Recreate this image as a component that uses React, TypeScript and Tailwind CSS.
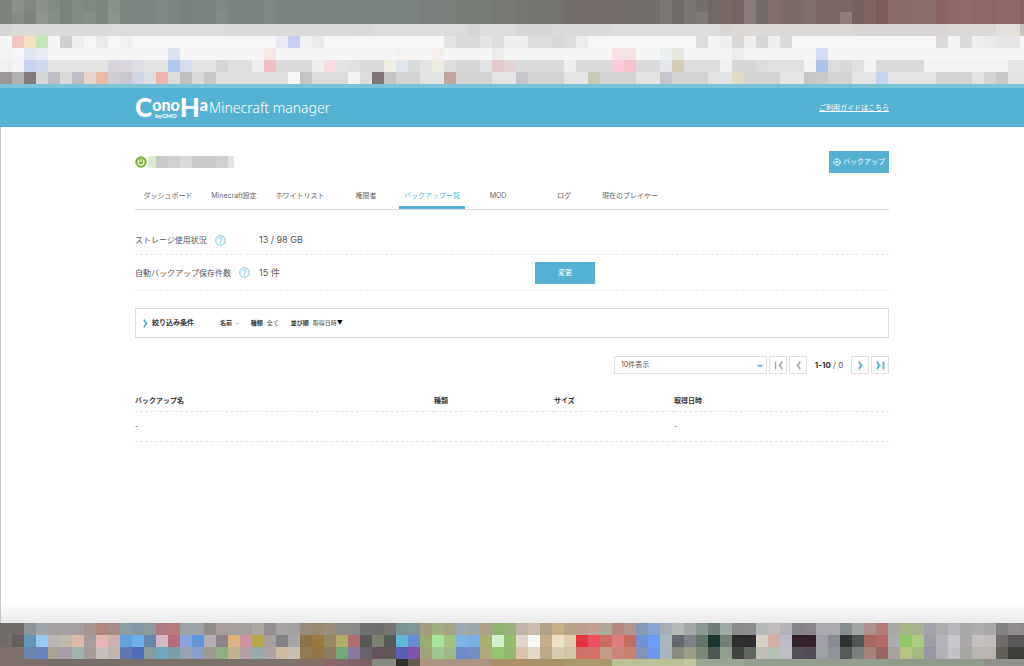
import React, { useState } from "react";

// Each row is a list of cell colours, "d9d9d9*4" repeats a colour four times
const topRows: string[] = [
    "7c847d 899089 7f8881 8a918b 828a84 7a827c 818983 7f8781 7d857f 88908a 7d8680*3 7f8882 7c857f 78817b 7b8580*2 7f8883 7b8580*3 7e8782 7b8580*4 7a857f*2 7a8580*3 79837e*3 79807b*3 787d78*3 777a75*2 767873 757570*2 75716d 756e6b*5 76706c*3 7b7876 706c6a 7c7674 756f6c 706967 7a6b69 736765 8b7b78 756c69 806f6b 7c6c69*2 7f706c 7a6865*2 7b6663 756260 7e6361 7b5a5a 8b6c6a 876c68 8a706c 8c6f6c 8a6765 8a6b69 8f6c6b 8c6767*2 8f686a*2 8b6062",
    "7c847d 848b84 7a837c 8e958f 858d87 7a827c 818983 858d87 7d857f 8b938d 7d8680*3 7f8882 7c857f 78817b 7b8580*2 818a84 7b8580*3 7e8782 7b8580*4 7a857f*2 7a8580*3 79837e*3 79807b*3 787d78*3 777a75*2 767873 757570*2 75716d 756e6b*5 76706c*3 7b7876 706c6a 7c7674 827a77 706967 7a6b69 736765 8b7b78 756c69 806f6b 7c6c69*2 7f706c 7a6865*2 8f7e7c 756260 7e6361 7b5a5a 8b6c6a 876c68 8a706c 8c6f6c 8a6765 8a6b69 8f6c6b 8c6767*2 8f686a*2 8b6062",
    "d5d5d4 dadad9*8 dbdbda*10 dadad8*10 d9dad8*2 dcdddb*6 dbdbda*2 d5d6d4 dcdddb*3 d6d7d5*3 dadad8*5 dcdcda*5 dedcda*4 d9d5d2 dcd8d6*10 d9d5d4*8 dcd8d6*4 e3dfdd*2 c8c2bb*2",
    "f5f5f5 f3c4c4 f3e2bd c4e6bd f5f5f5 cfcfcf eeeeee f6f6f6 e9e9e9 f6f6f6 f1f1f1 f6f6f6*12 e9e9f6 c6cff0 f0f0f0 e9e9e9 f6f6f6*10 e3e3e3 dadada*2 e3e3e3 dcdcdc efefef*2 dcdcdc*2 d8d8d8 dcdcdc ececec f6f6f6*9 dcdcdc f3f3f3 eeeeee dad8d7 eeeeee d6d6d6 eeeeee dadada f6f6f6*12 dcd9d9 f3f3f3 dadada eeeeee e9e9e9 e5e5e5*2 f6f6f6",
    "f3f3f3 f6f6f6 dfe4f2 e6e9f2 f5f5f5*10 dbe1ee f5f5f5*7 f6e6e6 f5f5f5*10 f5f1ef f5f5f5*2 f5eeec f5f5f5*4 f0ebeb f5f5f5*9 f5e0e3*2 f5f5f5*2 eaeff0 e6e8df f3f3f3*4 ececec f5f5f5*6 d3dcf0 f5f5f5*17",
    "f0f0f0 f5f5f5 c6d3ee ccd8ec e3e3e3*5 d8d3dd d9d6dd dddde3 e3e3e3*2 b0c7ea d5ddeb e3e3e3*2 d5d5d8 dedede*2 eeeeee f0bfc4 d9d9d9*3 eeeeee f5dde0 e3e3e3 e0e0e0 dadada*2 eeeee3 e0e5ec d8dadc e3e3e3 ecebdf dddddf d6d6d6*2 e3e3e3 e3c9ca e3d3d4 dadada*4 eeeeee dadada*3 f7ccd8 f3c2ca dadada*2 e3e5ea d6ccb4 dcdcdc*3 f0f0f0 d8d6d4*2 dbdbdb e0e0e0*3 f3f3f3 adc4e8 dcdcdc d8d8d8 e0e0e0 f3f3f3 dadada*4 f3f3f3*7 e5e5e5*2",
    "9b9697 b3b0b0 827a7c d6d6d8 bdbdc6 dadada bdbdc4 e6d5cc ecb8a6 d0cdd4 cac7ce d0d4e6 dfdfe3 ecb3ac dcdcdc bfbfbf d9d9d9 c9c8c6 dedede*6 f6f6f6 c4c4c4 dcdcdc*3 f3f3f3 dcdcdc 807678 c6c4c2 d3d3d3*2 e3e3e3*2 c0a49e d4d4d4*3 e4e4e4*2 c4c4ca d3d3d3*3 e5e5e5*2 c9c8b2 d4d4d4*3 e3e3e3*2 c4c4cc d3d3d3*3 e2e2e2*2 dfdac2 d4d4d4*3 e6e6e6*2 c6c6c6 cccaca d4d4d4*2 e6e6e6*2 c4d3ee e4e4e4*4 d3d3d3*3 e3e3e3 d3d3d3 c8c8c8 e3e3e3*2",
];

const bottomRows: string[] = [
    "716b68 6f6a69 8b9598 9fa6ab a3a09f*3 a69690 b08580 a68b88 8c9da5 8499a3 8e989d ad7c80 b87a7b 9ca3a6 9da2a6 928d88 a89c9c a5a09e*2 aea8a2 948f8f a5a3a3 a3a09f 988b79 978a73 968d7c 8c8b85 8a8a8a 707070 6e706d 757673 7d9496 7f9599 a39c80 9eb07f a3a385 9dabb0 9da8ad ada085 8fb272 9baf7a c0b2ab cabfb2 b0a286 c4b283 b7a589 bd9f94 c49f95 adaa9c b58683 b0968d 8898b0 8ba5d2 a6aeb5 b5b9b6 a3a8a5 8a9892 6e7f78 9eaaa4 8b8b8b 8d8d8d b4b8b9 bfbabc b3b2b9 86828a 8b828c aaa9b0*2 868c8f a1a7a5 ad8f8d b07d79 aba9a5 a5b584 a9b194 a4a3ac adabae b5b4b9 aaa8a8 aeacac aaa9a8 848383 918d8d 8c8b8a",
    "736c68 655f5c 6495b5 99c9f0 b9b6b8 bfbba9 dab9a6 a79c99 e6b5b3 cfb1ac 62a1dc 6cb1ed 6c85a8 d3b7c1 b36c7b 8aa5da 6096dc b3afae 8c828a dab37d cb95a1 b3a64b a7a09e 828286 a5a5a8 8c7448 9c7a3d 958664 b3ad6c b06d70 575756 7b8071 575955 62b7d4 678cd6 9dab72 a6e69b a3c07f 7fb5e3 79b0eb a5b36b d5f0cf 94bc6a e3d3cf fbfaf7 c6ae8b efe0c5 e0ceb0 e5363f ec5060 cc6a60 dd7d7d c26b5f 7091d0 6c9bf8 aab7bf 64696b 7c8287 64736a 1d3530 748077 2d2e2d*2 d9d1c4 d1ae9f bcbbcc 34222b 332029 9f9fa8 8a8a93 2f3433 4f5754 a66762 b46a67 adadad 93c465 aecb86 9f9da6 b3b2b8 c6c7cc aaa8a9 c3c0bf bfbcbb 706d6c 5a5857*2",
    "7d716b 7d726d 6c87ab 6c83c0 a9a393 a89dac 9cb3ae a69b96 c5c0bc bfb3ad 6278ae 526eb9 8b9a9d 71a6bf 7a9fa6 95a1b0 8aa0c8 9e9992 8ead83 c0b291 b2a0a5 96abb0 ada3a6 cbb9a1 c9bfb5 937a56 957646 8c7b60 73a77a 8c79a0 66616a 64525c 605656 5c5db5 7d53ac a0a374 9fc68b a1b786 6e8cc8 748dc2 b0ab78 94c670 96b76e dac3ad e2d8c5 bba888 d6ccb0 cfc5a8 cf7163 d4706a c49c88 c98779 ca8175 8393b6 6f98e5 a9b5bd 888c80 9a9d87 7b8878 4c5a51 93a08d 424541 61655f bfbdb4 b2c2b2 bdbfc5 54505a 524c58 9fa1a7 91949b 565b58 7a807c a6807d 97655f a9a19e b5c38b a4b87f 9796a3 b0b0b5 c0c2c7 a8a7a5 b7b5b0 b8b4ae 5f5f57 3d3c38*2",
    "7b706a*4 776d69*6 7b716b*8 7d716c*7 83706b*2 8c666b 84696b 7f656c 7c6066 888a80*2 33302b 635a4e ac9583*6 ab9069*3 a9916b*3 a99a6e*4 bcc097*6 c0c39d 99a593*4 949e8f*12 919b8c*8 8f918a*4",
];

const tabs = [
    "ダッシュボード",
    "Minecraft設定",
    "ホワイトリスト",
    "権限者",
    "バックアップ一覧",
    "MOD",
    "ログ",
    "現在のプレイヤー",
];

const columns = ["バックアップ名", "種類", "サイズ", "取得日時"];

const expandRow = (row: string): string[] =>
    row.split(" ").flatMap((item) => {
        const [color, times] = item.split("*");
        return Array<string>(Number(times || 1)).fill(color);
    });

function Mosaic({ rows, height, className }: { rows: string[]; height: number; className: string }) {
    return (
        <svg
            className={className}
            viewBox={`0 0 1024 ${height}`}
            preserveAspectRatio="none"
            shapeRendering="crispEdges"
            aria-hidden="true"
        >
            {rows.map((row, y) =>
                expandRow(row).map((color, x) => (
                    <rect key={`${x}-${y}`} x={x * 12} y={y * 12} width="12" height="12" fill={`#${color}`} />
                ))
            )}
        </svg>
    );
}

function HelpIcon() {
    return (
        <svg className="size-[11px] shrink-0" viewBox="0 0 22 22" fill="none" stroke="#55b2d4" aria-hidden="true">
            <circle cx="11" cy="11" r="9.5" strokeWidth="1.6" />
            <path d="M8 8.600c0-4 6.200-4 6.200-.4 0 2.300-3.100 2.300-3.100 5" strokeWidth="2" />
            <path d="M11.100 15v2.200" strokeWidth="2" />
        </svg>
    );
}

function Arrow({ direction, bar, color }: { direction: "left" | "right"; bar?: boolean; color: string }) {
    return (
        <svg className="h-[9px] w-[11px]" viewBox="0 0 11 9" fill="none" stroke={color} strokeWidth="1.8" aria-hidden="true">
            {direction === "left" ? (
                <>
                    <path d="M7 .5Q6.300 3 4.500 4.500Q6.300 6 7 8.500" transform={bar ? "translate(2 0)" : undefined} />
                    {bar && <path d="M2.500.5v8" strokeWidth="1.500" />}
                </>
            ) : (
                <>
                    <path d="M4 .5Q4.700 3 6.500 4.500Q4.700 6 4 8.500" transform={bar ? "translate(-2 0)" : undefined} />
                    {bar && <path d="M8.500.5v8" />}
                </>
            )}
        </svg>
    );
}

export default function App() {
    const [activeTab, setActiveTab] = useState<string>("バックアップ一覧");
    const [perPage, setPerPage] = useState<string>("10");

    const pagerButton = "flex size-[18px] items-center justify-center border border-[#e0e0e0] bg-white";

    return (
        <div className="flex min-h-screen flex-col bg-white font-['Inter','Noto_Sans_CJK_JP',sans-serif] text-[7px] leading-3 text-[#555]">
            <Mosaic rows={topRows} height={84} className="block h-[84px] w-full" />

            <header className="border-t-4 border-[#7cc3d6] bg-[#55b2d4] text-white">
                <div className="mx-auto flex h-[39px] max-w-[754px] items-center justify-between">
                    <h1 className="flex items-center gap-px">
                        <span className="flex items-start font-['Lato',sans-serif] text-[16px] leading-4 font-black">
                            <span className="text-[26px] leading-5">C</span>
                            <span className="flex flex-col items-center">
                                <span>ono</span>
                                <span className="text-[6px] leading-[5px]">byGMO</span>
                            </span>
                            <span className="text-[26px] leading-5">H</span>
                            <span>a</span>
                        </span>
                        <span className="font-['Noto_Sans',sans-serif] text-[14px] leading-5 font-light">Minecraft manager</span>
                    </h1>
                    <a href="#guide" className="underline">ご利用ガイドはこちら</a>
                </div>
            </header>

            <main className="flex-1 border-x border-l-[#c8c8c8] border-r-white">
                <div className="mx-auto max-w-[754px] pt-6">
                    <div className="flex items-center justify-between">
                        <div className="flex items-center gap-px">
                            <svg className="size-[12px]" viewBox="0 0 24 24" fill="none" stroke="#fff" aria-hidden="true">
                                <circle cx="12" cy="12" r="11.500" fill="#79b637" stroke="none" />
                                <path d="M8.500 7.500a6 6 0 1 0 7 0M12 5v7" strokeWidth="2.200" />
                            </svg>
                            <svg className="h-3 w-[86px]" viewBox="0 0 86 12" shapeRendering="crispEdges" aria-hidden="true">
                                <path fill="#dde9d6" d="M0 0h8v12H0z" />
                                <path fill="#c9c9c9" d="M8 0h12v12H8z" />
                                <path fill="#d0d0d0" d="M20 0h12v12H20z" />
                                <path fill="#dadada" d="M32 0h12v12H32z" />
                                <path fill="#cbcbcb" d="M44 0h24v12H44z" />
                                <path fill="#d0d0d0" d="M68 0h12v12H68z" />
                                <path fill="#e3e3e3" d="M80 0h6v12h-6z" />
                            </svg>
                        </div>
                        <button className="flex h-[22px] w-[60px] items-center justify-center gap-0.5 bg-[#55b2d4] text-white">
                            <svg className="size-2" viewBox="0 0 16 16" fill="none" stroke="currentColor" aria-hidden="true">
                                <path d="M3.500 4A6.300 6.300 0 1 1 2 9M0 6.500l2.500 2.500L5 6.500" strokeWidth="2" />
                                <circle cx="8.300" cy="8.200" r="1.800" strokeWidth="2" />
                            </svg>
                            バックアップ
                        </button>
                    </div>

                    <nav className="mt-2.5 flex border-b border-[#dcdcdc]">
                        {tabs.map((tab) => (
                            <button
                                key={tab}
                                onClick={() => setActiveTab(tab)}
                                className={`h-[26px] w-[66px] border-b-[3px] pt-[3px] text-center whitespace-nowrap ${
                                    tab === activeTab ? "border-[#55b2d4] text-[#55b2d4]" : "border-transparent text-[#666]"
                                }`}
                            >
                                {tab}
                            </button>
                        ))}
                    </nav>

                    <dl className="mt-4 text-[8px]">
                        <div className="grid h-[29px] grid-cols-[124px_276px_1fr] items-center border-b border-dashed border-[#e8e8e8]">
                            <dt className="flex items-center gap-2 whitespace-nowrap">
                                ストレージ使用状況
                                <HelpIcon />
                            </dt>
                            <dd className="text-[9px]">13 / 98 GB</dd>
                        </div>
                        <div className="grid h-9 grid-cols-[124px_276px_1fr] items-center border-b border-dashed border-[#e8e8e8]">
                            <dt className="flex items-center gap-2 whitespace-nowrap">
                                自動バックアップ保存件数
                                <HelpIcon />
                            </dt>
                            <dd className="text-[9px]">15 件</dd>
                            <dd>
                                <button className="block h-[22px] w-[60px] bg-[#55b2d4] text-[7px] text-white">変更</button>
                            </dd>
                        </div>
                    </dl>

                    <button className="mt-[17px] flex h-[30px] w-full items-center border border-[#e0e0e0] pl-1 text-left text-[6px]">
                        <Arrow direction="right" color="#55b2d4" />
                        <span className="ml-px w-[68px] text-[7px] font-bold text-[#333]">絞り込み条件</span>
                        <span className="flex gap-3">
                            <span className="flex gap-1"><b className="text-[#333]">名前</b>-</span>
                            <span className="flex gap-1"><b className="text-[#333]">種類</b>全て</span>
                            <span className="flex gap-1"><b className="text-[#333]">並び順</b><span>取得日時<span className="text-black">▼</span></span></span>
                        </span>
                    </button>

                    <div className="mt-[18px] flex items-center justify-end gap-0.5">
                        <div className="relative">
                            <select
                                aria-label="表示件数"
                                value={perPage}
                                onChange={(e) => setPerPage(e.target.value)}
                                className="block h-[18px] w-[153px] appearance-none border border-[#e0e0e0] bg-white px-1.5"
                            >
                                <option value="10">10件表示</option>
                                <option value="20">20件表示</option>
                                <option value="50">50件表示</option>
                            </select>
                            <svg className="pointer-events-none absolute top-2 right-1 h-1 w-1.5" viewBox="0 0 6 4" fill="none" stroke="#55b2d4" aria-hidden="true">
                                <path d="M.5 1Q3 3.500 5.500 1" strokeWidth="1.200" />
                            </svg>
                        </div>
                        <button aria-label="最初" className={pagerButton}><Arrow direction="left" bar color="#aaa" /></button>
                        <button aria-label="前へ" className={pagerButton}><Arrow direction="left" color="#aaa" /></button>
                        <span className="min-w-10 text-center text-[8px]"><b className="text-[#333]">1-10</b> / 0</span>
                        <button aria-label="次へ" className={pagerButton}><Arrow direction="right" color="#55b2d4" /></button>
                        <button aria-label="最後" className={pagerButton}><Arrow direction="right" bar color="#55b2d4" /></button>
                    </div>

                    <table className="mt-[15px] w-full table-fixed text-left">
                        <colgroup>
                            <col />
                            <col className="w-[120px]" />
                            <col className="w-[120px]" />
                            <col className="w-[215px]" />
                        </colgroup>
                        <thead>
                            <tr className="h-[22px] border-b border-dashed border-[#e4e4e4] text-[#333]">
                                {columns.map((column) => (
                                    <th key={column} scope="col" className="pt-0.5 font-bold">{column}</th>
                                ))}
                            </tr>
                        </thead>
                        <tbody>
                            <tr className="h-[30px] border-b border-dashed border-[#e4e4e4]">
                                <td className="pt-0.5">-</td>
                                <td></td>
                                <td></td>
                                <td className="pt-0.5">-</td>
                            </tr>
                        </tbody>
                    </table>
                </div>
            </main>

            <footer>
                <div className="h-5 border-l border-[#c8c8c8] bg-linear-to-b from-white to-[#e8e8e8]" />
                <Mosaic rows={bottomRows} height={43} className="block h-[43px] w-full" />
            </footer>
        </div>
    );
}
